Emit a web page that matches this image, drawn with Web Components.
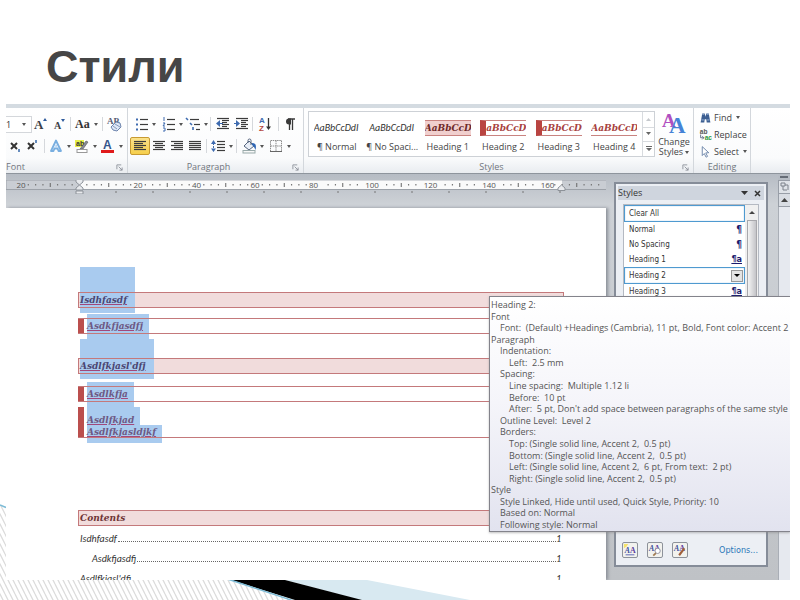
<!DOCTYPE html>
<html lang="ru">
<head>
<meta charset="utf-8">
<meta name="viewport" content="width=device-width, initial-scale=1">
<title>Стили</title>
<style>
html,body{margin:0;height:100%;background:#fff}
body{font-family:"Open Sans","Noto Sans",sans-serif;color:#444}
</style>
</head>
<body>
<slide-page>
  <slide-title slot="title">Стили</slide-title>
  <word-window></word-window>
</slide-page>
<script>
const define = (name, html, setup) => {
  const t = document.createElement('template');
  t.innerHTML = html;
  customElements.define(name, class extends HTMLElement {
    constructor() {
      super();
      this.attachShadow({mode: 'open'}).append(t.content.cloneNode(true));
    }
    connectedCallback() { if (setup) setup(this, this.shadowRoot); }
  });
};

const para = (x, w, y) => `<path d="M${x} ${y}h${w}" />`;
const lines = (rows) => `<g stroke="#3c3c3c" stroke-width="1.2" transform="translate(0 .5)">${rows.map(r => para(r[0], r[1], r[2])).join('')}</g>`;
const icons = {
  grow: ['0 0 16 16', '<text x="1" y="13" font-family="Liberation Serif" font-weight="bold" font-size="13" fill="#3c3f46">A</text><path d="M10 5l2-3 2 3z" fill="#2f5b9c"/>'],
  shrink: ['0 0 16 16', '<text x="3" y="13" font-family="Liberation Serif" font-weight="bold" font-size="10" fill="#3c3f46">A</text><path d="M10 3h4l-2 3z" fill="#2f5b9c"/>'],
  aa: ['0 0 16 16', '<text x="0" y="12" font-family="Liberation Serif" font-weight="bold" font-size="12" fill="#333">Aa</text>'],
  clear: ['0 0 16 16', '<text x="1" y="8" font-family="Liberation Serif" font-weight="bold" font-size="9" fill="#555c74">AB</text><path d="M5 11l5-5 4 1 1 4-4 4-4-1z" fill="#dfe7f5" stroke="#6d84ad"/><path d="M7 10l4 3M9 8l5 3" stroke="#6d84ad" stroke-width=".8"/>'],
  sub: ['0 0 16 16', '<path d="M4 5l6 6M10 5l-6 6" stroke="#333" stroke-width="2"/><path d="M12 11v3" fill="none" stroke="#3467a8" stroke-width="1.500"/>'],
  sup: ['0 0 16 16', '<path d="M3 5l6 6M9 5l-6 6" stroke="#333" stroke-width="2"/><path d="M11 2v3" fill="none" stroke="#3467a8" stroke-width="1.500"/>'],
  effects: ['0 0 16 16', '<path d="M3 13L8 2.500 13 13h-2.500L9.500 10.500h-3L5.500 13z" fill="#eef6ff" stroke="#78aee0" stroke-width="1.800" stroke-linejoin="round"/><path d="M7.300 8.500h1.600L8.100 6.500z" fill="#78aee0"/>'],
  hilite: ['0 0 16 16', '<rect x="1" y="2" width="9" height="7" fill="#e6f04a"/><text x="2" y="8" font-family="Liberation Sans" font-weight="bold" font-size="7" fill="#333">ab</text><path d="M6 11l6-8 2 1-5 7z" fill="#888b96" stroke="#555" stroke-width=".6"/><rect x="3" y="11.500" width="10" height="3" fill="#fff" stroke="#999"/>'],
  color: ['0 0 16 16', '<text x="3" y="11" font-family="Liberation Sans" font-weight="bold" font-size="12" fill="#34558c">A</text><rect x="1" y="12" width="13" height="3" fill="#e01b1b"/>'],
  bullets: ['0 0 16 16', '<path d="M3 3.500h2M3 8.500h2M3 13.500h2" stroke="#3e6bb0" stroke-width="2"/>' + lines([[7,8,3],[7,8,8],[7,8,13]])],
  numbers: ['0 0 16 16', '<path d="M4 1v4M3 7h2l-2 3h2M3 12h2v3H3" fill="none" stroke="#3e6bb0"/>' + lines([[7,8,3],[7,8,8],[7,8,13]])],
  multi: ['0 0 16 16', '<path d="M1 2l2 2M5 7l2 2M8 11v3" stroke="#3e6bb0" stroke-width="1.600"/>' + lines([[5,9,3],[9,6,8],[11,4,13]])],
  outdent: ['0 0 16 16', lines([[3,12,2],[8,7,4],[8,5,6],[8,7,8],[8,5,10],[3,12,12]]) + '<path d="M6 4v7L2 7.500z" fill="#3e6bb0"/><path d="M5 7.500h4" stroke="#3e6bb0"/>'],
  indent: ['0 0 16 16', lines([[3,12,2],[8,7,4],[8,5,6],[8,7,8],[8,5,10],[3,12,12]]) + '<path d="M3 4v7l4-3.500z" fill="#3e6bb0"/><path d="M1 7.500h4" stroke="#3e6bb0"/>'],
  sort: ['0 0 16 16', '<text x="2" y="7" font-family="Liberation Sans" font-weight="bold" font-size="8" fill="#3e6bb0">A</text><text x="2" y="15" font-family="Liberation Sans" font-weight="bold" font-size="8" fill="#b5483e">Z</text><path d="M11.500 2v10" stroke="#333" stroke-width="1.300"/><path d="M9 10.500h5l-2.500 3.500z" fill="#333"/>'],
  pilcrow: ['0 0 16 16', '<path d="M7.500 8V14M10.500 3v11M6 3h7" stroke="#3a3a3a" stroke-width="1.300"/><path d="M9 2.500H7a3 3 0 000 6h2z" fill="#3a3a3a"/>'],
  left: ['0 0 16 16', lines([[2,12,3],[2,9,5],[2,12,7],[2,9,9],[2,12,11]])],
  center: ['0 0 16 16', lines([[2,12,3],[4,8,5],[2,12,7],[4,8,9],[2,12,11]])],
  right: ['0 0 16 16', lines([[2,12,3],[5,9,5],[2,12,7],[5,9,9],[2,12,11]])],
  justify: ['0 0 16 16', lines([[2,12,3],[2,12,5],[2,12,7],[2,12,9],[2,12,11]])],
  spacing: ['0 0 16 16', lines([[7,8,3],[7,8,6],[7,8,9],[7,8,12]]) + '<path d="M1 6l2.500-4L6 6zM1 10.500h5L3.500 14z" fill="#3e6bb0"/><path d="M3.500 5v7" stroke="#3e6bb0" stroke-dasharray="2 1"/>'],
  bucket: ['0 0 16 16', '<path d="M3 8l5-5 5 5-5 4z" fill="#e8eef7" stroke="#55647d"/><path d="M7 5V2.500a1.500 1.500 0 013 0V7" fill="none" stroke="#55647d"/><path d="M11 5c4 0 4.500 3 3.500 7-1-2-1.500-4-3.500-5z" fill="#2f66b5"/><rect x="2" y="12.500" width="12" height="2.500" fill="#f8f8f8" stroke="#9aa"/>'],
  borders: ['0 0 16 16', '<path d="M2.500 2.500h11v11h-11zM8 2.500v11M2.500 8h11" fill="none" stroke="#8b8b8b" stroke-dasharray="1.500 .7"/><path d="M2 13.500h12" stroke="#666"/>'],
  find: ['0 0 16 16', '<path d="M2 14L4 3h3l1 4 1-4h3l2 11H9.500L9 10H7l-.5 4z" fill="#3d5f91"/><path d="M4 4h2.500M9.500 4H12M3 11h3M10 11h3" stroke="#a9c1e4"/>'],
  replace: ['0 0 16 16', '<text x="1" y="7" font-family="Liberation Sans" font-weight="bold" font-size="8" fill="#555">ab</text><text x="7" y="15" font-family="Liberation Sans" font-weight="bold" font-size="8" fill="#2c9a40">ac</text><path d="M2 8v4h4M4 10l2 2-2 2" fill="none" stroke="#4c5a78"/>'],
  select: ['0 0 16 16', '<path d="M4 2l8 7.500-3.700.2 2.200 4.300-1.800 1-2.200-4.500L4 13z" fill="#fff" stroke="#58749c"/>'],
  styles: ['0 0 26 26', '<text y="22" font-family="Liberation Serif" font-weight="bold"><tspan x="1" dy="-6" font-size="19" fill="#b04fc0">A</tspan><tspan x="8" dy="6" font-size="23" fill="#4583d6">A</tspan></text>'],
  launcher: ['0 0 8 8', '<path d="M1 6V1h5M3 3l4 4M7 4v3H4" fill="none" stroke="#8a8f98"/>'],
  newstyle: ['0 0 16 16', '<path d="M1 1h5L4 4 1 6z" fill="#f5e36a"/><text y="11" font-family="Liberation Serif" font-weight="bold" font-size="9"><tspan x="2" font-style="italic" fill="#3c4f9a">A</tspan><tspan fill="#5a3da0">A</tspan></text><path d="M3 13.500h10" stroke="#4a56b0"/>'],
  inspect: ['0 0 16 16', '<text y="9" font-family="Liberation Serif" font-weight="bold" font-size="9"><tspan x="1" font-style="italic" fill="#3c4f9a">A</tspan><tspan fill="#5a3da0">A</tspan></text><circle cx="11" cy="9" r="3" fill="#fff" stroke="#889"/><path d="M9 11.500l-3 3" stroke="#a07a50" stroke-width="2"/>'],
  manage: ['0 0 16 16', '<text y="9" font-family="Liberation Serif" font-weight="bold" font-size="9"><tspan x="1" font-style="italic" fill="#3c4f9a">A</tspan><tspan fill="#5a3da0">A</tspan></text><path d="M7 14l6-8" stroke="#a0603c" stroke-width="2.400"/>']
};
const icon = (n) => `<svg viewBox="${icons[n][0]}" aria-hidden="true" overflow="visible">${icons[n][1]}</svg>`;

define('slide-page', `<style>
:host{display:flex;flex-direction:column;position:relative;height:100vh;min-height:600px;box-sizing:border-box;padding:0 10px 20px 6px;background:#fff;overflow:hidden}
.decor{position:absolute;left:0;bottom:0;width:480px;height:96px}
header{padding:35px 40px 0}
main{position:relative;flex:1;display:flex;margin-top:5px;min-height:0}
::slotted(word-window){flex:1}
</style>
<svg class="decor" viewBox="0 0 480 96" aria-hidden="true">
<defs><pattern id="hatch" width="5" height="10" patternUnits="userSpaceOnUse"><path d="M0 0L5 10M-5 0L0 10M5 0L10 10" stroke="#dcdcdc" stroke-width="1.300"/></pattern></defs>
<path d="M0 1Q120 40 231 76L295 96H0z" fill="url(#hatch)"/>
<path d="M285 76H367L470 96H360z" fill="#d8e9f1"/>
<path d="M231 76H285L362 96H295z" fill="#000"/>
<path d="M0 1L6 3.500M229 75.500L294 97" stroke="#7cbbd6" stroke-width="1.400" fill="none"/>
</svg>
<header><slot name="title"></slot></header><main><slot></slot></main>`);

define('slide-title', `<style>
:host{display:block}
h1{margin:0;font:bold 45px/64px "Liberation Sans",Arial,sans-serif;color:#464646}
</style><h1><slot></slot></h1>`);

define('word-window', `<style>
:host{display:flex;flex-direction:column;position:relative;overflow:hidden;background:#c1c5ca}
.work{flex:1;min-height:0;display:grid;grid-template-columns:minmax(0,1fr) 154px 14px;column-gap:8px;background:linear-gradient(#b6bcc4,#cdd1d6 30px,#bfc2c6)}
.doc{display:flex;flex-direction:column;padding-top:6px;min-width:0;min-height:0}
doc-page{flex:1;margin-top:14px;min-height:0}
styles-pane{margin:8px 0 13px}
scroll-strip{margin-left:2px}
style-tip{position:absolute;left:483px;right:0;top:192px}
</style>
<ribbon-bar></ribbon-bar>
<div class="work"><div class="doc"><doc-ruler></doc-ruler><doc-page></doc-page></div><styles-pane></styles-pane><scroll-strip></scroll-strip></div>
<style-tip></style-tip>`);

define('tool-button', `<style>
:host{display:block;flex:none;width:18px;height:18px}
:host([w="20"]){width:20px}:host([w="22"]){width:22px}:host([w="24"]){width:24px}:host([w="26"]){width:26px}:host([w="28"]){width:28px}
button{all:unset;box-sizing:border-box;width:100%;height:100%;display:flex;align-items:center;justify-content:center;gap:3px;border-radius:2px}
svg{width:16px;height:16px;flex:none}
:host([on]) button{background:linear-gradient(#fbe28a,#f6cf4c);border:1px solid #c79a32}
i{display:none;border:solid transparent;border-width:3px 2px 0;border-top-color:#555}
:host([drop]) i{display:block}
</style><button type="button"></button>`, (el, root) => {
  const b = root.querySelector('button');
  b.setAttribute('aria-label', el.getAttribute('name'));
  b.innerHTML = icon(el.getAttribute('icon')) + '<i></i>';
});

define('tool-rule', `<style>:host{display:block;flex:none;width:1px;height:14px;margin:0 1px 0 2px;background:#d5d8dc}</style>`);

define('ribbon-group', `<style>
:host{display:flex;flex-direction:column;position:relative;box-sizing:border-box;border-right:1px solid #d3d7dc}
.body{flex:1;min-height:0}
footer{display:flex;align-items:center;justify-content:center;height:13px;font-size:9px;line-height:13px;color:#70757d}
button{all:unset;position:absolute;right:4px;bottom:2px;width:7px;height:7px;display:none}
:host([launch]) button{display:block}
:host([launch]) footer{padding-right:14px}
svg{display:block;width:7px;height:7px}
:host([shift]) footer{margin-right:88px}
</style><div class="body"><slot></slot></div><footer></footer><button type="button" aria-label="Dialog">${icon('launcher')}</button>`,
(el, root) => { root.querySelector('footer').textContent = el.getAttribute('label'); });

define('style-card', `<style>
:host{display:block;flex:1;min-width:0}
button{all:unset;display:flex;flex-direction:column;align-items:center;width:100%;height:100%}
.s{box-sizing:border-box;width:46px;height:16px;margin:8px 0 4px;overflow:hidden;white-space:nowrap;font:italic 10px/16px Carlito,Lato,sans-serif;color:#333}
.n{font-size:9px;line-height:13px;color:#444;white-space:nowrap}
:host([kind]) .s{font:italic bold 10px/14px "DejaVu Serif Condensed","DejaVu Serif",serif;color:#a8433f;border:solid #c98380;border-width:1px 0}
:host([kind=fill]) .s{background:#f0cfce;color:#6e2a29}
:host([kind=bar]) .s{border-left:6px solid #b94441}
:host([kind=line]) .s{border-top-color:transparent}
</style><button type="button"><span class="s"></span><span class="n"></span></button>`, (el, root) => {
  root.querySelector('.s').textContent = el.getAttribute('sample');
  root.querySelector('.n').textContent = el.getAttribute('name');
});

define('ribbon-bar', `<style>
:host{display:flex;box-sizing:border-box;height:70px;border-top:4px solid #d4dbe1;border-bottom:1px solid #8e959d;background:linear-gradient(#fff,#fafbfc 50px,#e9ecf0)}
.row{display:flex;align-items:center;height:18px}
.row+.row{margin-top:4px}
.rows{padding-top:7px}
.para{padding:7px 0 0 2px}
.font{flex:none;width:122px}.paragraph{flex:none;width:176px}.style{flex:1;min-width:0}.edit{flex:none;width:57px}
.spare{flex:none;width:39px}
.combo{display:flex;align-items:center;box-sizing:border-box;width:26px;height:17px;border:1px solid #d4d7db;border-left:0;background:#fff}
.combo input{all:unset;width:16px;font-size:9px;color:#333}
.combo button{all:unset;border:solid transparent;border-width:3px 2px 0;border-top-color:#555}
.gal{display:flex;margin-left:4px}
.frame{flex:1;min-width:0;display:flex;height:46px;box-sizing:border-box;border:1px solid #cdd1d6;background:#fff}
.scroll{flex:none;width:11px;display:grid;grid-template-rows:1fr 1fr 1fr;border-left:1px solid #d8dbdf}
.scroll button{all:unset;display:grid;place-items:center}
.scroll button+button{border-top:1px solid #d8dbdf}
.scroll path{fill:#666}.scroll .off path{fill:#c5c8cc}
.change{all:unset;flex:none;width:38px;display:flex;flex-direction:column;align-items:center;font-size:9px;line-height:10px;text-align:center;white-space:nowrap}
.change svg{width:26px;height:26px}
.galwrap{padding-top:3px}
.cmds{display:flex;flex-direction:column;padding:1px 0 0 5px}
.cmds button{all:unset;display:flex;align-items:center;gap:2px;height:17px;font-size:9px;white-space:nowrap}
.cmds svg{width:13px;height:13px}
.dd{border:solid transparent;border-width:3px 2px 0;border-top-color:#555;display:inline-block;margin-left:2px;vertical-align:middle}
</style>
<ribbon-group class="font" label="Font" launch shift><div class="rows">
<div class="row"><span class="combo"><input aria-label="Font size" value="1"><button type="button" aria-label="Sizes"></button></span>
<tool-button icon="grow" name="Grow font"></tool-button><tool-button icon="shrink" name="Shrink font"></tool-button><tool-rule></tool-rule><tool-button w="28" drop icon="aa" name="Change case"></tool-button><tool-rule></tool-rule><tool-button w="20" icon="clear" name="Clear formatting"></tool-button></div>
<div class="row"><tool-button icon="sub" name="Subscript"></tool-button><tool-button icon="sup" name="Superscript"></tool-button><tool-rule></tool-rule><tool-button w="26" drop icon="effects" name="Text effects"></tool-button><tool-button w="26" drop icon="hilite" name="Highlight"></tool-button><tool-button w="26" drop icon="color" name="Font color"></tool-button></div>
</div></ribbon-group>
<ribbon-group class="paragraph" label="Paragraph" launch><div class="para">
<div class="row"><tool-button w="28" drop icon="bullets" name="Bullets"></tool-button><tool-button w="26" drop icon="numbers" name="Numbering"></tool-button><tool-button w="24" drop icon="multi" name="Multilevel list"></tool-button><tool-rule></tool-rule><tool-button w="20" icon="outdent" name="Decrease indent"></tool-button><tool-button icon="indent" name="Increase indent"></tool-button><tool-rule></tool-rule><tool-button w="22" icon="sort" name="Sort"></tool-button><tool-rule></tool-rule><tool-button w="20" icon="pilcrow" name="Show marks"></tool-button></div>
<div class="row"><tool-button w="20" on icon="left" name="Align left"></tool-button><tool-button icon="center" name="Center"></tool-button><tool-button icon="right" name="Align right"></tool-button><tool-button icon="justify" name="Justify"></tool-button><tool-rule></tool-rule><tool-button w="26" drop icon="spacing" name="Line spacing"></tool-button><tool-rule></tool-rule><tool-button w="28" drop icon="bucket" name="Shading"></tool-button><tool-button w="26" drop icon="borders" name="Borders"></tool-button></div>
</div></ribbon-group>
<ribbon-group class="style" label="Styles" launch><div class="galwrap"><div class="gal">
<div class="frame">
<style-card sample="AaBbCcDdI" name="¶ Normal"></style-card><style-card sample="AaBbCcDdI" name="¶ No Spaci..."></style-card><style-card kind="fill" sample="AaBbCcD" name="Heading 1"></style-card><style-card kind="bar" sample="aBbCcD" name="Heading 2"></style-card><style-card kind="bar" sample="aBbCcD" name="Heading 3"></style-card><style-card kind="line" sample="AaBbCcD" name="Heading 4"></style-card>
<div class="scroll"><button type="button" class="off" aria-label="Row up"><svg width="6" height="4"><path d="M0 4l2.500-3L5 4z"/></svg></button><button type="button" aria-label="Row down"><svg width="6" height="4"><path d="M0 0h5L2.500 3z"/></svg></button><button type="button" aria-label="More"><svg width="6" height="6"><path d="M0 0h6v1H0zM0 2h6L3 5z"/></svg></button></div>
</div>
<button class="change" type="button">${icon('styles')}<span>Change<br>Styles<i class="dd"></i></span></button>
</div></div></ribbon-group>
<ribbon-group class="edit" label="Editing"><div class="cmds">
<button type="button">${icon('find')}<span>Find</span><i class="dd"></i></button><button type="button">${icon('replace')}<span>Replace</span></button><button type="button">${icon('select')}<span>Select</span><i class="dd"></i></button>
</div></ribbon-group><div class="spare"></div>`);

define('doc-ruler', `<style>
:host{display:block;height:14px}
svg{display:block;width:100%;height:14px}
text{font:8px "Open Sans",sans-serif;fill:#555;text-anchor:middle}
</style><svg viewBox="0 0 602 14" preserveAspectRatio="xMinYMin slice" aria-hidden="true"></svg>`, (el, root) => {
  let s = '<rect width="601" height="9.500" fill="#c9cdd3" stroke="#9da2a9"/><rect x="73" y=".5" width="483" height="8.500" fill="#fafafa"/>';
  const step = 58.5;
  for (let i = -1; i <= 8; i++) {
    const x = 73.5 + i * step;
    for (let k = 1; k < 8; k++) {
      const tx = x + k * step / 8;
      if (tx < 4 || tx > 594) continue;
      if (i > 3 && i < 8 && (k === 1 || k === 7)) continue;
      s += k === 4 ? `<path d="M${tx} 3v4" stroke="#666"/>` : `<path d="M${tx} 4v1.500" stroke="#777" stroke-width="1.200"/>`;
    }
    if (i) s += `<text x="${x}" y="8">${Math.abs(i) * 20}</text>`;
  }
  for (let x = 110; x < 560; x += 37) s += `<path d="M${x} 11v2" stroke="#777"/>`;
  s += '<path d="M70 -1h7v3l-3.500 3L77 8v2h-7V8l3.500-3L70 2zM70 11h7v3h-7z" fill="#e8eaed" stroke="#8d9299"/><path d="M555.500 5l3.500 3v2.500h-7V8z" fill="#e8eaed" stroke="#8d9299"/>';
  root.querySelector('svg').innerHTML = s;
});

define('doc-heading', `<style>
:host{display:block;position:relative;box-sizing:border-box;font:italic bold 10px/16px "DejaVu Serif Condensed","DejaVu Serif",serif;color:#4b4672}
h2{all:unset;display:block;position:relative;padding-left:2px;background:#f1dcdc}
h2::after{content:"";position:absolute;inset:0;border:1px solid #c4797b}
span{display:inline;background:#a9cbef;padding:27px 8px 8px 0}
:host(.b) span{padding-top:21px}
u{text-decoration-color:#a0487c}
:host([kind=plain]){color:#6e3436}
:host([kind=plain]) span{background:none}
:host([kind=plain]) u{text-decoration:none}
:host([kind=sub]){color:#6d5984}
:host([kind=sub]) h2{background:none;border-left:6px solid #bb4f4d;padding-left:3px}
:host([kind=sub]) h2::after{border-width:1px 0;border-color:#c4797b;inset:0 0 0 -6px}
:host([kind=sub]) span{padding:6px 6px 8px 0}
</style><h2><span><u><slot></slot></u></span></h2>`);

define('toc-row', `<style>
:host{display:flex;align-items:flex-end;height:20px;font:italic 10px/14px Carlito,Lato,sans-serif;color:#333}
a{color:inherit;text-decoration:none;display:flex;flex:1;align-items:flex-end}
i{flex:1;height:4px;margin:0 0 4px 1px;box-sizing:border-box;border-bottom:1px dotted #666}
</style><a href="#"><slot></slot><i></i><span>1</span></a>`);

define('doc-page', `<style>
:host{display:block;box-sizing:border-box;background:#fff;padding:84px 42px 0 72px;overflow:hidden;box-shadow:2px 0 3px #8b9098}
.a{margin-top:10px}.b{margin-top:24px}.c{margin-top:12px}
.two{margin-top:5px}
.contents{margin-top:72px}
toc-row{margin:0 3px 0 2px}
.in{margin-left:14px}
</style>
<doc-heading>Isdhfasdf</doc-heading>
<doc-heading class="a" kind="sub">Asdkfjasdfj</doc-heading>
<doc-heading class="b">Asdlfkjasl'dfj</doc-heading>
<doc-heading class="c" kind="sub">Asdlkfja</doc-heading>
<doc-pair class="two"></doc-pair>
<doc-heading class="contents" kind="plain">Contents</doc-heading>
<toc-row>Isdhfasdf</toc-row><toc-row class="in">Asdkfjasdfj</toc-row><toc-row>Asdlfkjasl'dfj</toc-row>`);

define('doc-pair', `<style>
:host{display:block;font:italic bold 10px/12px "DejaVu Serif Condensed","DejaVu Serif",serif;color:#6d5984}
div{position:relative;border-left:6px solid #bb4f4d;padding:7px 0 0 3px}
div::after{content:"";position:absolute;inset:0 0 0 -6px;border-bottom:1px solid #c4797b}
p{margin:0}
span{background:#a9cbef;padding:7px 6px 0 0}
p+p span{padding:1px 6px 6px 0}
u{text-decoration-color:#a0487c}
</style><div><p><span><u>Asdlfkjad</u></span></p><p><span><u>Asdlfkjasldjkf</u></span></p></div>`);

define('styles-pane', `<style>
:host{display:flex;flex-direction:column;box-sizing:border-box;border:2px solid #858c98;background:#eceff4;padding:2px;font:8px/15px "DejaVu Sans Condensed","DejaVu Sans",sans-serif;color:#333}
header{display:flex;align-items:center;height:14px;background:#cfd5de;font:9px/14px "Open Sans",sans-serif;color:#333}
header span{flex:1}
header button{all:unset;margin:0 3px;display:grid;place-items:center}
.list{flex:1;display:flex;margin:4px 5px 12px;border:1px solid #b4b9c2;background:#fff;min-height:0}
ul{all:unset;flex:1;display:block;list-style:none}
li button{all:unset;display:flex;align-items:center;width:100%;box-sizing:border-box;padding:0 3px 0 5px}
li span{flex:1}
li b{font:bold 10px/15px "DejaVu Sans Condensed","DejaVu Sans",sans-serif;color:#1c1c6e}
li b.u{font-size:9px;line-height:15px;text-decoration:underline}
li .box{border:1px solid #4f9ad0;box-shadow:inset 0 0 1px #4f9ad0;padding:0 1px 0 4px}
.dd{display:grid;place-items:center;width:12px;height:12px;border:1px solid #999;box-sizing:border-box;background:#e4e4e4}
.bar{flex:none;width:13px;background:#f0f0f0;display:flex;flex-direction:column;align-items:center}
.bar button{all:unset;height:15px;display:grid;place-items:center}
.bar i{flex:1;width:10px;background:linear-gradient(90deg,#f4f4f4,#c4c4c8);border:1px solid #a8a8ac;box-sizing:border-box}
footer{display:flex;align-items:center;gap:9px;padding:0 6px 5px 4px}
footer button{all:unset;box-sizing:border-box;width:16px;height:16px;border:1px solid #8d929a;border-radius:2px;background:#f2f2ee}
footer svg{display:block;width:14px;height:14px}
footer a{margin-left:auto;font-size:9px;color:#2a77b8;text-decoration:none}
</style>
<header><span>Styles</span><button type="button" aria-label="Pane options"><svg width="7" height="4"><path d="M0 0h7L3.500 4z" fill="#333"/></svg></button><button type="button" aria-label="Close"><svg width="7" height="7"><path d="M1 1l5 5M6 1L1 6" stroke="#333" stroke-width="1.500"/></svg></button></header>
<div class="list"><ul>
<li><button type="button" class="box"><span>Clear All</span></button></li>
<li><button type="button"><span>Normal</span><b>¶</b></button></li>
<li><button type="button"><span>No Spacing</span><b>¶</b></button></li>
<li><button type="button"><span>Heading 1</span><b class="u">¶a</b></button></li>
<li><button type="button" class="box"><span>Heading 2</span><i class="dd"><svg width="6" height="4"><path d="M0 0h6L3 3z"/></svg></i></button></li>
<li><button type="button"><span>Heading 3</span><b class="u">¶a</b></button></li>
</ul><div class="bar"><button type="button" aria-label="Scroll up"><svg width="6" height="4"><path d="M0 3l3-3 3 3z" fill="#444"/></svg></button><i></i></div></div>
<footer><button type="button" aria-label="New style">${icon('newstyle')}</button><button type="button" aria-label="Style inspector">${icon('inspect')}</button><button type="button" aria-label="Manage styles">${icon('manage')}</button><a href="#">Options...</a></footer>`);

define('scroll-strip', `<style>
:host{display:flex;flex-direction:column;align-items:center;background:#e6e9ef;box-shadow:inset 1px 0 #a9aeb6}
.split{align-self:stretch;height:6px;background:#b6bcc4;display:grid;place-items:center}
button{all:unset;box-sizing:border-box;width:100%;height:14px;display:grid;place-items:center;border:1px solid #989ea7;border-right:0;background:#dfe3e8}
button+button{height:13px;border-top:0;background:#d9dde3}
</style><div class="split"><svg width="8" height="2"><path d="M0 0h8v2H0z" fill="#666d77"/></svg></div>
<button type="button" aria-label="View ruler"><svg width="9" height="10"><path d="M1 1h4v3H1zM3 4v4h4M5 3h3v5" fill="none" stroke="#7c828b"/></svg></button>
<button type="button" aria-label="Scroll up"><svg width="8" height="4"><path d="M0 4l3.500-4L7 4z" fill="#444"/></svg></button>`);

define('style-tip', `<style>
:host{display:flex;flex-direction:column;justify-content:space-between;box-sizing:border-box;min-height:236px;padding:2px 0 1px 1px;border:1px solid #83838b;border-right:0;background:linear-gradient(#fff,#f5f5fa 45%,#e2e3ef);box-shadow:0 1px 2px #8888;font:9px/11px "Open Sans","Noto Sans",sans-serif;color:#555;white-space:pre}
.i1{padding-left:9px}.i2{padding-left:18px}
</style>`, (el, root) => {
  const rows = ['Heading 2:', 'Font', '>Font:  (Default) +Headings (Cambria), 11 pt, Bold, Font color: Accent 2', 'Paragraph', '>Indentation:', '>>Left:  2.5 mm', '>Spacing:', '>>Line spacing:  Multiple 1.12 li', '>>Before:  10 pt', '>>After:  5 pt, Don\'t add space between paragraphs of the same style', '>Outline Level:  Level 2', '>Borders:', '>>Top: (Single solid line, Accent 2,  0.5 pt)', '>>Bottom: (Single solid line, Accent 2,  0.5 pt)', '>>Left: (Single solid line, Accent 2,  6 pt, From text:  2 pt)', '>>Right: (Single solid line, Accent 2,  0.5 pt)', 'Style', '>Style Linked, Hide until used, Quick Style, Priority: 10', '>Based on: Normal', '>Following style: Normal'];
  for (const r of rows) {
    const d = document.createElement('div');
    const t = r.replace(/^>+/, '');
    d.className = 'i' + (r.length - t.length);
    d.textContent = t;
    root.append(d);
  }
});
</script>
</body>
</html>
